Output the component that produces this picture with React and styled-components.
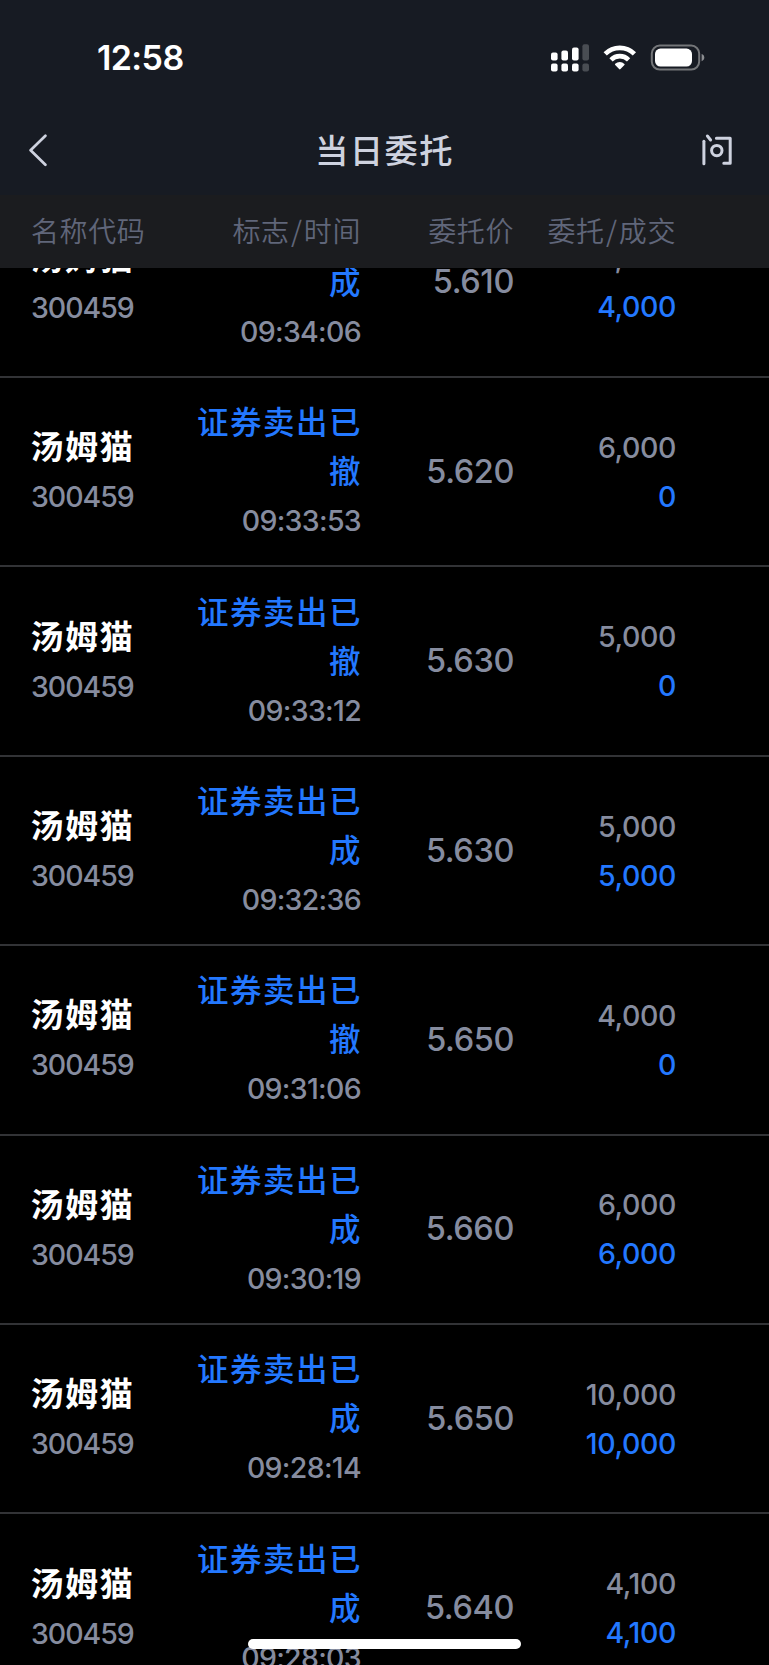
import React from "react";
import styled, { createGlobalStyle, ThemeProvider } from "styled-components";

// --------------------------------------------------

const theme = {
	colors: {
		bar: "#171b23",
		head: "#1b1c1f",
		headText: "#60667a",
		title: "#ced2df",
		muted: "#868c9f",
		blue: "#2378ff",
		line: "#323336",
	},
	fonts: {
		latin: `Inter, "Noto Sans CJK SC", sans-serif`,
		cjk: `"Noto Sans CJK SC", sans-serif`,
	},
};

const GlobalStyle = createGlobalStyle`
	* {
		box-sizing: border-box;
	}

	body {
		margin: 0;
		background: #000;
	}
`;

// --------------------------------------------------

const Screen = styled.div`
	position: relative;
	display: flex;
	flex-direction: column;
	width: 769px;
	height: 1665px;
	overflow: hidden;
	background: #000;
	font-family: ${({ theme }) => theme.fonts.latin};
`;

const StatusBar = styled.div`
	display: flex;
	flex: none;
	align-items: center;
	justify-content: space-between;
	height: 115px;
	padding: 0 64px 0 97px;
	background: ${({ theme }) => theme.colors.bar};
`;

const Clock = styled.div`
	color: #fff;
	font-size: 34px;
	font-weight: 600;
	line-height: 40px;
	letter-spacing: -0.6px;
`;

const StatusIcons = styled.svg`
	display: block;
	width: 154px;
	height: 30px;
`;

const NavBar = styled.div`
	display: grid;
	flex: none;
	grid-template-columns: 1fr auto 1fr;
	align-items: center;
	height: 80px;
	padding: 0 35px 10px 35px;
	background: ${({ theme }) => theme.colors.bar};
	color: ${({ theme }) => theme.colors.title};
`;

const BackIcon = styled.svg`
	display: block;
	width: 20px;
	height: 34px;
	margin-left: -8px;
`;

const AskIcon = styled.svg`
	display: block;
	justify-self: end;
	width: 32px;
	height: 34px;
`;

const Title = styled.h1`
	margin: -3px 0 0;
	font-family: ${({ theme }) => theme.fonts.cjk};
	font-size: 33.3px;
	font-weight: 500;
	line-height: 48px;
	letter-spacing: 1.4px;
`;

const Columns = styled.div`
	display: grid;
	grid-template-columns: 160px 170px 153px 162px;
	align-items: center;
	padding-left: 31px;
`;

const TableHead = styled(Columns)`
	position: relative;
	z-index: 1;
	flex: none;
	height: 73px;
	padding-bottom: 3px;
	background: ${({ theme }) => theme.colors.head};
	color: ${({ theme }) => theme.colors.headText};
	font-family: ${({ theme }) => theme.fonts.cjk};
	font-size: 28px;
	font-weight: 350;
	line-height: 40px;
	letter-spacing: 0.6px;
`;

const HeadCell = styled.div`
	text-align: ${({ $left }) => ($left ? "left" : "right")};
	white-space: nowrap;
`;

const Slash = styled.span`
	margin: 0 1.3px;
`;

// scrolled list, its first row is partly under the table head
const List = styled.div`
	flex: none;
	margin-top: -79.4px;
`;

const Row = styled(Columns)`
	height: 189.42px;
	border-bottom: 2px solid ${({ theme }) => theme.colors.line};
`;

const Cell = styled.div`
	display: flex;
	flex-direction: column;
	align-items: ${({ $left }) => ($left ? "flex-start" : "flex-end")};
`;

const Name = styled.div`
	height: 50px;
	margin-left: -0.6px;
	color: #fff;
	font-family: ${({ theme }) => theme.fonts.cjk};
	font-size: 33px;
	font-weight: 700;
	line-height: 46px;
	letter-spacing: 1.7px;
`;

const Figure = styled.div`
	color: ${({ theme, $blue }) => ($blue ? theme.colors.blue : theme.colors.muted)};
	font-size: 28.5px;
	font-weight: 450;
	line-height: 49px;
	letter-spacing: ${({ $spacing = -0.4 }) => $spacing}px;
`;

const State = styled.div`
	width: 168px;
	height: 98px;
	margin: -2px -1px 2px 0;
	color: ${({ theme }) => theme.colors.blue};
	font-family: ${({ theme }) => theme.fonts.cjk};
	font-size: 31.5px;
	font-weight: 500;
	line-height: 49px;
	letter-spacing: 1.5px;
	text-align: right;
	word-break: break-all;
`;

const Price = styled.div`
	color: ${({ theme }) => theme.colors.muted};
	font-size: 32.5px;
	font-weight: 450;
	line-height: 48px;
	letter-spacing: -0.4px;
`;

const HomeIndicator = styled.div`
	position: absolute;
	z-index: 2;
	left: 248px;
	bottom: 16px;
	width: 273px;
	height: 10px;
	border-radius: 5px;
	background: #fff;
`;

// --------------------------------------------------

const orders = [
	{ state: "证券卖出已成", time: "09:34:06", price: "5.610", amount: "4,000", filled: "4,000" },
	{ state: "证券卖出已撤", time: "09:33:53", price: "5.620", amount: "6,000", filled: "0" },
	{ state: "证券卖出已撤", time: "09:33:12", price: "5.630", amount: "5,000", filled: "0" },
	{ state: "证券卖出已成", time: "09:32:36", price: "5.630", amount: "5,000", filled: "5,000" },
	{ state: "证券卖出已撤", time: "09:31:06", price: "5.650", amount: "4,000", filled: "0" },
	{ state: "证券卖出已成", time: "09:30:19", price: "5.660", amount: "6,000", filled: "6,000" },
	{ state: "证券卖出已成", time: "09:28:14", price: "5.650", amount: "10,000", filled: "10,000" },
	{ state: "证券卖出已成", time: "09:28:03", price: "5.640", amount: "4,100", filled: "4,100" },
];

// --------------------------------------------------

const Order = ({ state, time, price, amount, filled }) =>
	<Row>
		<Cell $left>
			<Name>汤姆猫</Name>
			<Figure $spacing={-1.05}>300459</Figure>
		</Cell>

		<Cell>
			<State>{state}</State>
			<Figure $spacing={-0.7}>{time}</Figure>
		</Cell>

		<Cell>
			<Price>{price}</Price>
		</Cell>

		<Cell>
			<Figure>{amount}</Figure>
			<Figure $blue>{filled}</Figure>
		</Cell>
	</Row>;

// --------------------------------------------------

// dual sim signal, wifi and battery
const SystemIcons = () =>
	<StatusIcons viewBox="0 0 154 30" fill="#fff">
		<rect x="0" y="9.5" width="6.6" height="8" rx="2" />
		<rect x="10.4" y="7.5" width="6.6" height="10" rx="2" />
		<rect x="21" y="4.5" width="6.6" height="13" rx="2" />
		<rect x="31.4" y="1.2" width="6.6" height="16.3" rx="2" opacity="0.22" />
		<rect x="0" y="20.6" width="6.6" height="7.8" rx="2" />
		<rect x="10.4" y="20.6" width="6.6" height="7.8" rx="2" />
		<rect x="21" y="20.6" width="6.6" height="7.8" rx="2" />
		<rect x="31.4" y="20.6" width="6.6" height="7.8" rx="2" opacity="0.22" />

		<g fill="none" stroke="#fff" strokeWidth="4.6">
			<path d="M54.2 10.9a20.6 20.6 0 0 1 29.2 0" />
			<path d="M60 16.8a12.4 12.4 0 0 1 17.6 0" />
		</g>
		<path d="M64.2 20.8a6.8 6.8 0 0 1 9.2 0.1c0.4 0.4 0.4 0.7 0 1.1l-3.9 4.1c-0.5 0.5-0.9 0.5-1.4 0l-3.9-4.1c-0.4-0.5-0.4-0.8 0-1.2z" />

		<rect x="100.8" y="2.6" width="47.4" height="24" rx="8" fill="none" stroke="#747679" strokeWidth="2" />
		<rect x="104" y="5.6" width="37" height="18" rx="5.5" />
		<path d="M150.6 11c3.6 0.8 3.6 6.4 0 7.2z" fill="#8b8d91" />
	</StatusIcons>;

// --------------------------------------------------

const App = () =>
	<ThemeProvider theme={theme}>
		<GlobalStyle />

		<Screen>
			<StatusBar>
				<Clock>12:58</Clock>
				<SystemIcons />
			</StatusBar>

			<NavBar>
				<BackIcon viewBox="0 0 20 34" fill="none" stroke="currentColor" strokeWidth="2.7" strokeLinecap="round" strokeLinejoin="round">
					<path d="M18.4 2.8L3.6 17.2l14.8 14.6" />
				</BackIcon>

				<Title>当日委托</Title>

				<AskIcon viewBox="0 0 32 34" fill="none" stroke="currentColor" strokeWidth="3" strokeLinecap="round" strokeLinejoin="round">
					<path d="M1.9 8.2v22.6" />
					<path d="M5.4 3l3.2 4" />
					<path d="M14.4 5.2h13.8v25h-6.4" />
					<circle cx="14.8" cy="17.6" r="5.2" />
				</AskIcon>
			</NavBar>

			<TableHead>
				<HeadCell $left>名称代码</HeadCell>
				<HeadCell>标志<Slash>/</Slash>时间</HeadCell>
				<HeadCell>委托价</HeadCell>
				<HeadCell>委托<Slash>/</Slash>成交</HeadCell>
			</TableHead>

			<List>
				{orders.map(order => <Order key={order.time} {...order} />)}
			</List>

			<HomeIndicator />
		</Screen>
	</ThemeProvider>;

// --------------------------------------------------

export default App;
